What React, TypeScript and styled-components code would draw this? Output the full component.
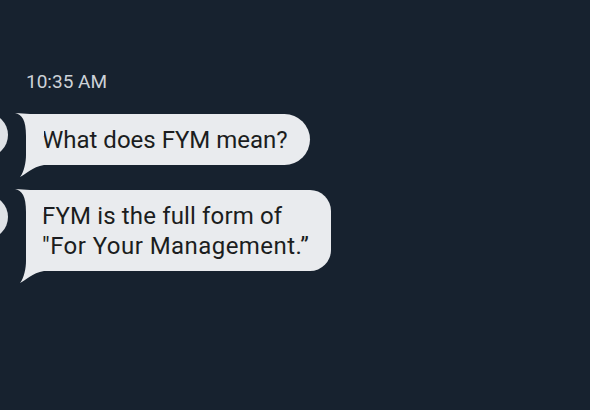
import React from "react";
import styled, { createGlobalStyle } from "styled-components";

const GlobalStyle = createGlobalStyle`
  html, body {
    margin: 0;
    padding: 0;
    background: #17222f;
  }
  body {
    font-family: Roboto, "Liberation Sans", sans-serif;
    overflow: hidden;
  }
`;

const Screen = styled.div`
  width: 590px;
  height: 410px;
  box-sizing: border-box;
  padding: 70px 0 0 0;
  background: #17222f;
  display: flex;
  flex-direction: column;
  overflow: hidden;
`;

const Timestamp = styled.div`
  margin-left: 26px;
  font-size: 19px;
  line-height: 24px;
  color: #cdd2d8;
  margin-bottom: 20px;
`;

const Thread = styled.div`
  display: flex;
  flex-direction: column;
  gap: 25px;
`;

const Row = styled.div`
  display: flex;
  align-items: flex-start;
  gap: 18px;
`;

const Avatar = styled.div<{ $offset: number }>`
  flex: none;
  width: 44px;
  height: 44px;
  margin-left: -36px;
  margin-top: ${({ $offset }) => $offset}px;
  border-radius: 50%;
  background: #dfe2e6;
`;

const Bubble = styled.div<{ $radius: number }>`
  position: relative;
  background: #e9ebee;
  color: #1b1d20;
  font-size: 24px;
  line-height: 30px;
  padding: 10.5px 22px 10.5px 16px;
  border-radius: 0 ${({ $radius }) => $radius}px ${({ $radius }) => $radius}px 0;
`;

const Line = styled.div<{ $spread: number }>`
  letter-spacing: ${({ $spread }) => $spread}px;
  white-space: nowrap;
`;

const TailTop = styled.svg`
  position: absolute;
  left: -12px;
  top: -2px;
  width: 30px;
  height: 26px;
  overflow: visible;
`;

const TailBottom = styled.svg`
  position: absolute;
  left: -7px;
  bottom: -12px;
  width: 25px;
  height: 32px;
  overflow: visible;
`;

const Tails = () => (
  <>
    <TailTop viewBox="-12 -2 30 26">
      <path
        d="M -11 -1 C -4 0.5, 0 6, 0 22 L 18 22 L 18 0 L 4 0 Q -3 -0.4 -11 -1 Z"
        fill="#e9ebee"
      />
    </TailTop>
    <TailBottom viewBox="-7 -20 25 32">
      <path
        d="M 0 -20 L 0 -10 C 0 -3, -2 7, -6 12 C 0 9, 6 2, 18 0 L 18 -20 Z"
        fill="#e9ebee"
      />
    </TailBottom>
  </>
);

const messages = [
  {
    offset: -1,
    radius: 26,
    lines: [{ text: "What does FYM mean?", spread: 0 }],
  },
  {
    offset: 5,
    radius: 21,
    lines: [
      { text: "FYM is the full form of", spread: 0.15 },
      { text: "″For Your Management.”", spread: 0.45 },
    ],
  },
];

export default function App() {
  return (
    <>
      <GlobalStyle />
      <Screen>
        <Timestamp>10:35 AM</Timestamp>
        <Thread>
          {messages.map((m, i) => (
            <Row key={i}>
              <Avatar $offset={m.offset} />
              <Bubble $radius={m.radius}>
                <Tails />
                {m.lines.map((l, j) => (
                  <Line key={j} $spread={l.spread}>
                    {l.text}
                  </Line>
                ))}
              </Bubble>
            </Row>
          ))}
        </Thread>
      </Screen>
    </>
  );
}
